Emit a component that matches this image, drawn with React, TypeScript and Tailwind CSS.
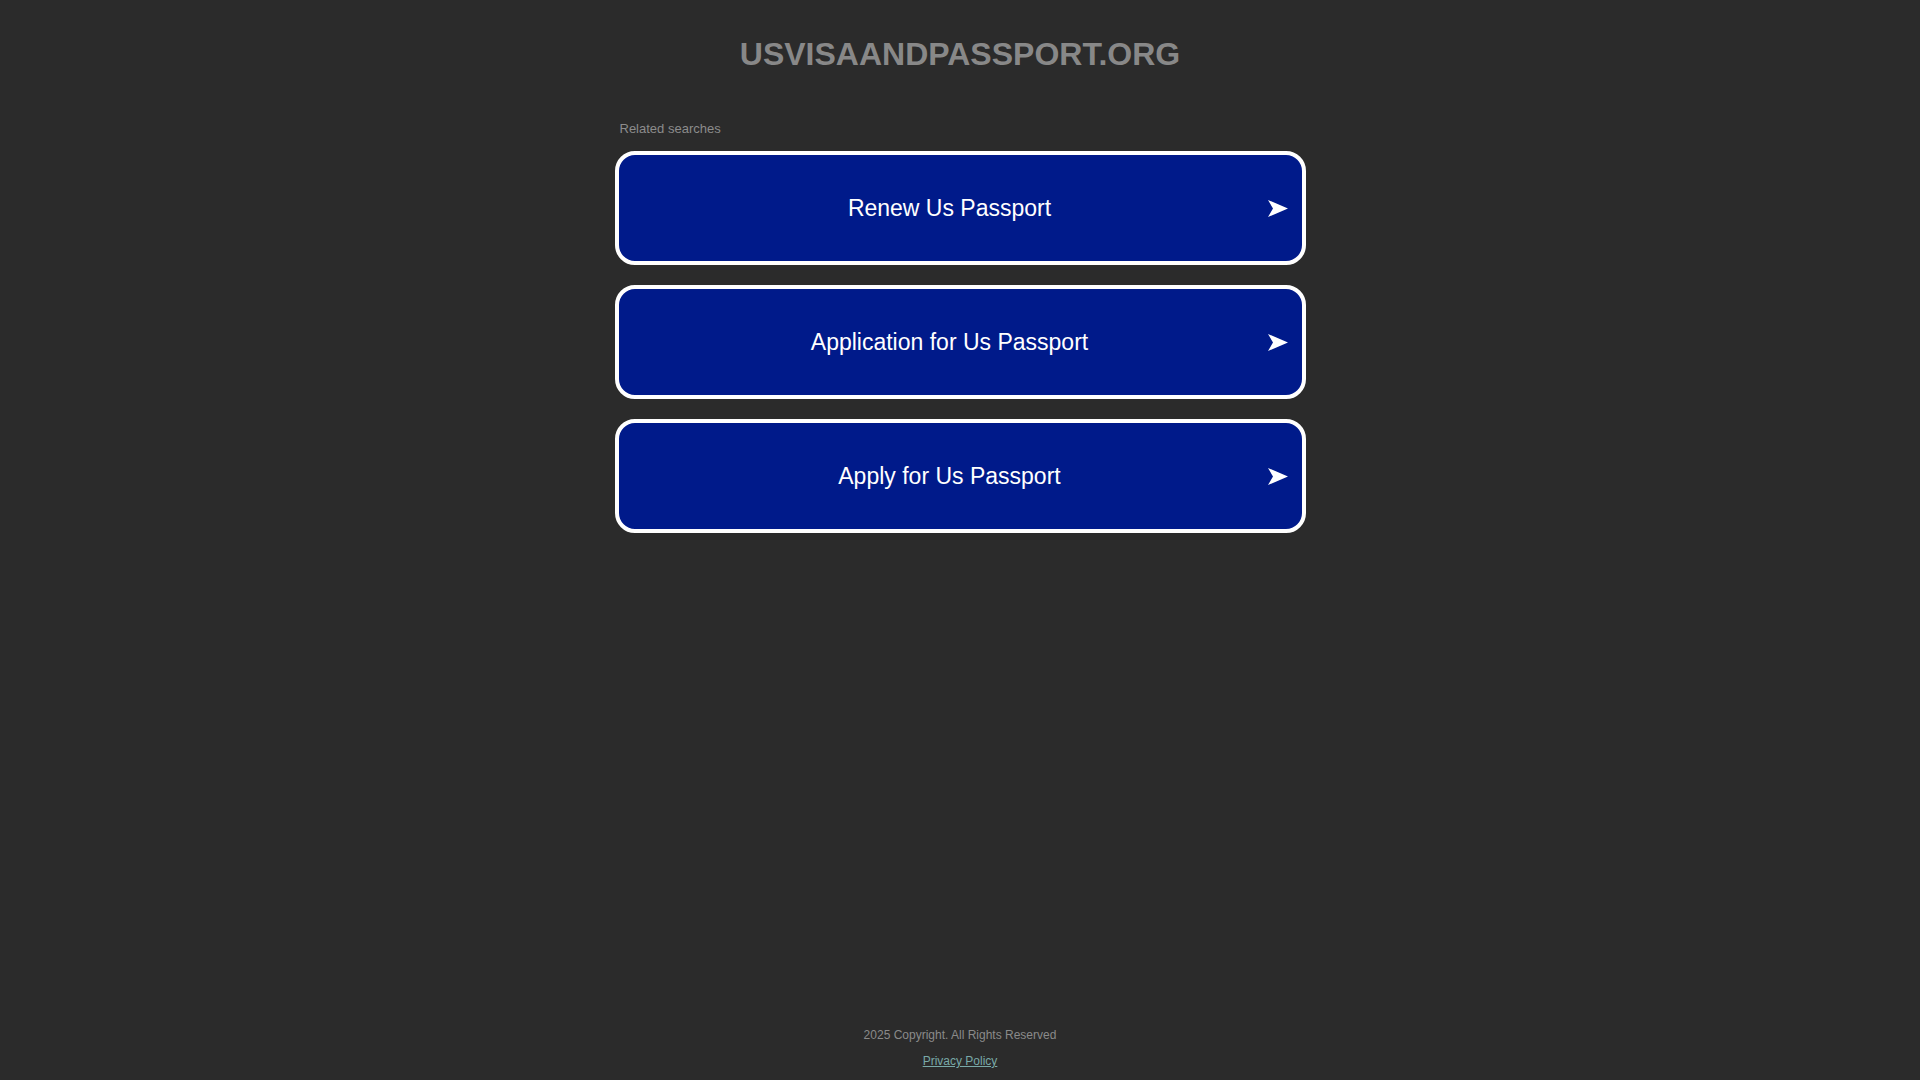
import React from "react";

const searches = ["Renew Us Passport", "Application for Us Passport", "Apply for Us Passport"];

const Arrow = () => (
  <svg width="20" height="17" viewBox="0 0 20 17" className="shrink-0">
    <path d="M0 0 L20 8.5 L0 17 L5 8.5 Z" fill="#ffffff" />
  </svg>
);

const SearchButton = ({ label }: { label: string }) => (
  <a
    href="#"
    className="flex items-center h-[114px] w-full rounded-[20px] border-[4px] border-white bg-[#001a8a] text-white"
  >
    <span className="flex-1 pl-[13px] text-center text-[23px] leading-[28px]">{label}</span>
    <span className="mr-[14px] flex">
      <Arrow />
    </span>
  </a>
);

export default function App() {
  return (
    <div
      className="flex min-h-screen flex-col items-center bg-[#2b2b2b]"
      style={{ fontFamily: '"Liberation Sans", Arial, sans-serif' }}
    >
      <h1 className="pt-[36px] text-[32px] font-bold leading-[37px] text-[#888888]">
        USVISAANDPASSPORT.ORG
      </h1>

      <div className="mt-[48px] w-[691px]">
        <div className="pl-[5px] text-[13px] leading-[15px] text-[#8c8c8c]">Related searches</div>
        <div className="mt-[15px] flex flex-col gap-[20px]">
          {searches.map((s) => (
            <SearchButton key={s} label={s} />
          ))}
        </div>
      </div>

      <div className="mt-auto flex flex-col items-center pb-[12px] text-[12px] leading-[14px]">
        <div className="text-[#8a8a8a]">2025 Copyright. All Rights Reserved</div>
        <a href="#" className="mt-[12px] text-[#79a9a8] underline">
          Privacy Policy
        </a>
      </div>
    </div>
  );
}
